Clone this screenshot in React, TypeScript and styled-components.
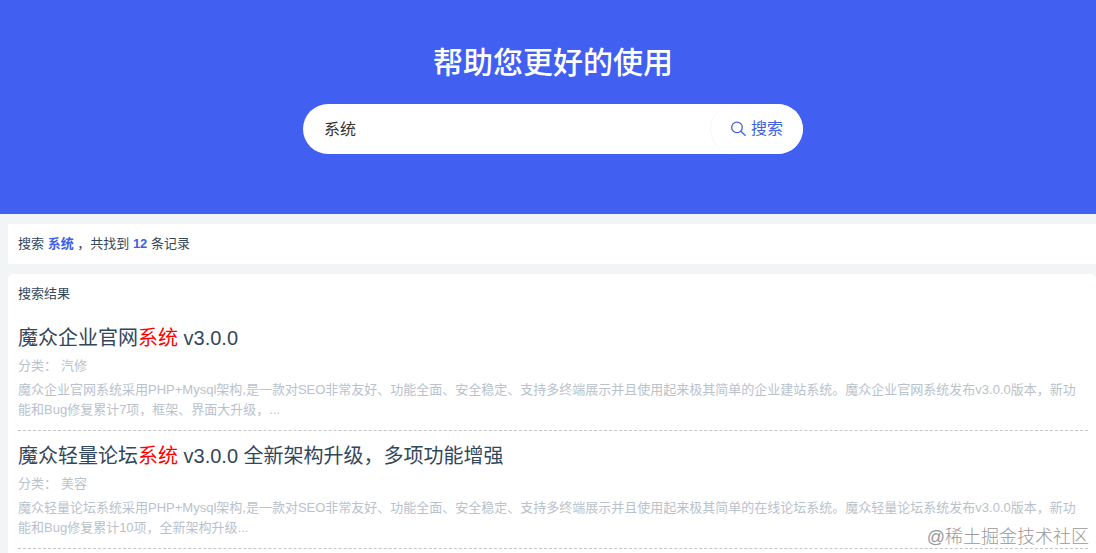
import React, { useState } from "react";
import styled, { createGlobalStyle } from "styled-components";

const GlobalStyle = createGlobalStyle`
  *, *::before, *::after { box-sizing: border-box; }
  body {
    margin: 0;
    background: #f2f5f6;
    color: #33475b;
    font: 13px/20px "Liberation Sans", "Noto Sans CJK SC", sans-serif;
    overflow: hidden;
  }
`;

const Page = styled.div`
  position: relative;
  height: 100vh;
  overflow: hidden;
`;

const Hero = styled.header`
  display: flex;
  flex-direction: column;
  align-items: center;
  gap: 19px;
  padding: 41px 0 60px 10px;
  background: #4160f1;
`;

const HeroTitle = styled.h1`
  margin: 0;
  color: #fff;
  font-size: 30px;
  font-weight: 500;
  line-height: 44px;
`;

const SearchForm = styled.form`
  display: flex;
  width: 500px;
  max-width: 100%;
  height: 50px;
  border-radius: 25px;
  background: #fff;
  overflow: hidden;
`;

const SearchInput = styled.input`
  flex: 1;
  min-width: 0;
  padding: 2px 21px 0;
  border: 0;
  outline: 0;
  background: transparent;
  color: #333;
  font: inherit;
  font-size: 16px;
`;

const SearchButton = styled.button`
  display: flex;
  align-items: center;
  gap: 4px;
  padding: 0 20px;
  border: 0;
  border-left: 1px solid #f4f5fb;
  border-radius: 25px;
  background: #fff;
  color: #4160e0;
  font: inherit;
  font-size: 16px;
`;

const Main = styled.main`
  display: flex;
  flex-direction: column;
  gap: 10px;
  padding: 10px 0 0 8px;
`;

const Summary = styled.section`
  padding: 10px;
  background: #fff;

  strong { color: #4160e6; }
`;

const Results = styled.section`
  padding: 10px 8px 10px 10px;
  border-radius: 5px;
  background: #fff;
`;

const ResultsHeading = styled.h2`
  margin: 0 0 9px;
  font-size: 13px;
  font-weight: 400;
  line-height: 20px;
`;

const Item = styled.article`
  padding: 11px 0 10px;
  border-bottom: 1px dashed #c4c7ca;
`;

const ItemTitle = styled.h3`
  margin: 0 0 4px;
  font-size: 20px;
  font-weight: 400;
  line-height: 28px;

  a { color: inherit; text-decoration: none; }
`;

const Keyword = styled.span`
  color: #f00;
`;

const Category = styled.div`
  display: flex;
  gap: 4px;
  margin-bottom: 4px;
  color: #b9c2cc;
`;

const Excerpt = styled.p`
  margin: 0;
  color: #b9c2cc;
`;

const Watermark = styled.div`
  position: absolute;
  right: 7px;
  bottom: 2px;
  color: #999;
  font-size: 18px;
  font-weight: 300;
  line-height: 28px;
`;

const SearchIcon = () => (
  <svg width="16" height="16" viewBox="0 0 16 16" fill="none" stroke="currentColor" strokeWidth="1.3" aria-hidden="true">
    <circle cx="6" cy="6.4" r="5.3" />
    <path d="M9.8 10.2 14.6 14.8" />
  </svg>
);

const items = [
  {
    before: "魔众企业官网",
    after: " v3.0.0",
    category: "汽修",
    text: "魔众企业官网系统采用PHP+Mysql架构,是一款对SEO非常友好、功能全面、安全稳定、支持多终端展示并且使用起来极其简单的企业建站系统。魔众企业官网系统发布v3.0.0版本，新功能和Bug修复累计7项，框架、界面大升级，...",
  },
  {
    before: "魔众轻量论坛",
    after: " v3.0.0 全新架构升级，多项功能增强",
    category: "美容",
    text: "魔众轻量论坛系统采用PHP+Mysql架构,是一款对SEO非常友好、功能全面、安全稳定、支持多终端展示并且使用起来极其简单的在线论坛系统。魔众轻量论坛系统发布v3.0.0版本，新功能和Bug修复累计10项，全新架构升级...",
  },
];

export default function App() {
  const [query, setQuery] = useState("系统");
  return (
    <Page lang="zh-CN">
      <GlobalStyle />
      <Hero>
        <HeroTitle>帮助您更好的使用</HeroTitle>
        <SearchForm role="search" onSubmit={(e) => e.preventDefault()}>
          <SearchInput aria-label="搜索" value={query} onChange={(e) => setQuery(e.target.value)} />
          <SearchButton type="submit">
            <SearchIcon />
            搜索
          </SearchButton>
        </SearchForm>
      </Hero>
      <Main>
        <Summary>
          搜索 <strong>系统</strong> ，共找到 <strong>12</strong> 条记录
        </Summary>
        <Results>
          <ResultsHeading>搜索结果</ResultsHeading>
          {items.map((item) => (
            <Item key={item.before}>
              <ItemTitle>
                <a href="#">
                  {item.before}
                  <Keyword>系统</Keyword>
                  {item.after}
                </a>
              </ItemTitle>
              <Category>
                <span>分类：</span>
                <span>{item.category}</span>
              </Category>
              <Excerpt>{item.text}</Excerpt>
            </Item>
          ))}
        </Results>
      </Main>
      <Watermark>@稀土掘金技术社区</Watermark>
    </Page>
  );
}
